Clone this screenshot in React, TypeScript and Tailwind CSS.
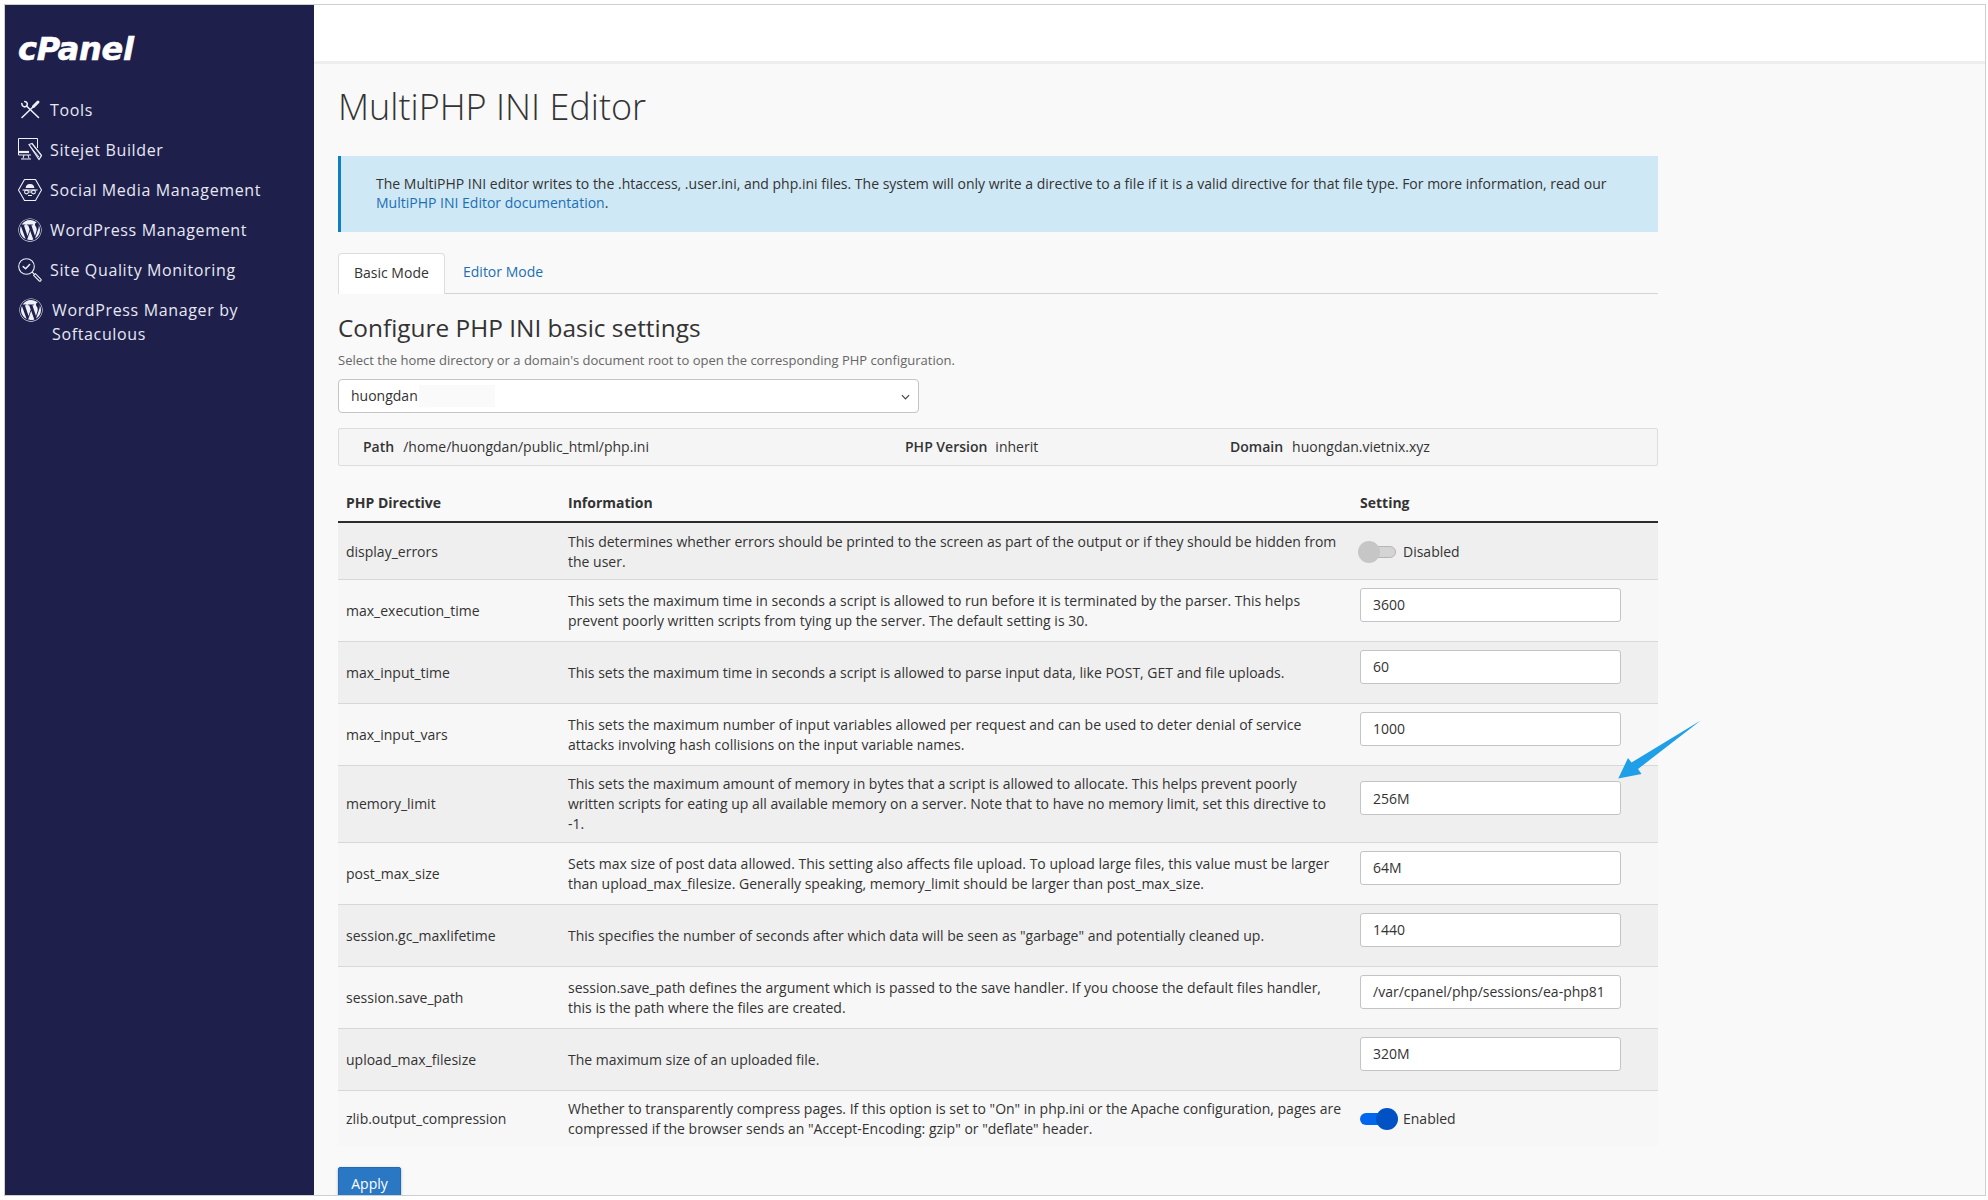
import React from "react";
import { FaWordpress } from "react-icons/fa";

const ToolsIcon = () => (
  <svg viewBox="0 0 24 24" className="w-[24px] h-[24px]" fill="none" stroke="#eef0f8" strokeLinecap="round" strokeLinejoin="round">
    <path d="M4 19.5 L15 9" strokeWidth="1.6" />
    <path d="M15.5 8.5 L20 4" strokeWidth="3" />
    <path d="M20.5 19.5 L8.5 8" strokeWidth="1.6" />
    <path d="M3.8 5.5 C4 9 7 9.5 8.5 8 C10 6.5 9.5 4 6.8 3.5" strokeWidth="1.6" />
  </svg>
);

const SitejetIcon = () => (
  <svg viewBox="0 0 24 24" className="w-[24px] h-[24px]" fill="none" stroke="#eef0f8" strokeWidth="1" strokeLinejoin="round">
    <path d="M13 17H0.5V0.5H19.5V10" />
    <path d="M0.5 14H11" strokeWidth="2.2" />
    <path d="M6 17 L5 20.5 M10 17 L11 20.5 M3 21H13" />
    <path d="M11 6.5 L14 5.5 L23.5 17.5 L21 21.5 Z" fill="#1e1f4b" strokeWidth="1.3" />
    <path d="M13 9.5 L21 19" />
  </svg>
);

const SocialIcon = () => (
  <svg viewBox="0 0 24 24" className="w-[24px] h-[24px]" fill="none" stroke="#eef0f8" strokeWidth="1.1" strokeLinejoin="round">
    <path d="M6.5 1.5H17.5L23.5 12L17.5 22.5H6.5L0.5 12Z" />
    <path d="M8.2 9.5 C9 5.5 15 5.5 15.8 9.5 Z" fill="#eef0f8" />
    <path d="M4.5 12H19.5" />
    <circle cx="8.5" cy="14" r="1.9" />
    <circle cx="15.5" cy="14" r="1.9" />
    <path d="M10.5 14H13.5M10 17.5H14" />
  </svg>
);

const QualityIcon = () => (
  <svg viewBox="0 0 24 24" className="w-[24px] h-[24px]" fill="none" stroke="#eef0f8" strokeWidth="1.1" strokeLinecap="round" strokeLinejoin="round">
    <circle cx="8.5" cy="8.5" r="7.8" />
    <path d="M5.2 8.6 L7.6 10.8 L11.6 6.6" strokeWidth="1.5" />
    <path d="M14.2 14.2 L16 16" />
    <path d="M15.6 17.3 L17.3 15.6 L23 21.4 C23.6 22.2 22.2 23.7 21.3 23 Z" />
  </svg>
);

const WpIcon = () => <FaWordpress className="w-[24px] h-[24px] text-[#eef0f8]" />;

const menu = [
  { label: "Tools", icon: <ToolsIcon /> },
  { label: "Sitejet Builder", icon: <SitejetIcon /> },
  { label: "Social Media Management", icon: <SocialIcon /> },
  { label: "WordPress Management", icon: <WpIcon /> },
  { label: "Site Quality Monitoring", icon: <QualityIcon /> },
];

type Row = { name: string; info: string[]; value?: string; toggle?: boolean; h: string; odd: boolean };

const rows: Row[] = [
  { name: "display_errors", info: ["This determines whether errors should be printed to the screen as part of the output or if they should be hidden from", "the user."], toggle: false, h: "h-[57px]", odd: true },
  { name: "max_execution_time", info: ["This sets the maximum time in seconds a script is allowed to run before it is terminated by the parser. This helps", "prevent poorly written scripts from tying up the server. The default setting is 30."], value: "3600", h: "h-[62px]", odd: false },
  { name: "max_input_time", info: ["This sets the maximum time in seconds a script is allowed to parse input data, like POST, GET and file uploads."], value: "60", h: "h-[62px]", odd: true },
  { name: "max_input_vars", info: ["This sets the maximum number of input variables allowed per request and can be used to deter denial of service", "attacks involving hash collisions on the input variable names."], value: "1000", h: "h-[62px]", odd: false },
  { name: "memory_limit", info: ["This sets the maximum amount of memory in bytes that a script is allowed to allocate. This helps prevent poorly", "written scripts for eating up all available memory on a server. Note that to have no memory limit, set this directive to", "-1."], value: "256M", h: "h-[77px]", odd: true },
  { name: "post_max_size", info: ["Sets max size of post data allowed. This setting also affects file upload. To upload large files, this value must be larger", "than upload_max_filesize. Generally speaking, memory_limit should be larger than post_max_size."], value: "64M", h: "h-[62px]", odd: false },
  { name: "session.gc_maxlifetime", info: ["This specifies the number of seconds after which data will be seen as \"garbage\" and potentially cleaned up."], value: "1440", h: "h-[62px]", odd: true },
  { name: "session.save_path", info: ["session.save_path defines the argument which is passed to the save handler. If you choose the default files handler,", "this is the path where the files are created."], value: "/var/cpanel/php/sessions/ea-php81", h: "h-[62px]", odd: false },
  { name: "upload_max_filesize", info: ["The maximum size of an uploaded file."], value: "320M", h: "h-[62px]", odd: true },
  { name: "zlib.output_compression", info: ["Whether to transparently compress pages. If this option is set to \"On\" in php.ini or the Apache configuration, pages are", "compressed if the browser sends an \"Accept-Encoding: gzip\" or \"deflate\" header."], toggle: true, h: "h-[56px]", odd: false },
];

const Toggle = ({ on }: { on: boolean }) => (
  <div className="flex items-center">
    {on ? (
      <div className="relative w-[38px] h-[22px] flex items-center">
        <div className="w-[30px] h-[12px] rounded-full bg-[#0066ee]" />
        <div className="absolute right-0 top-0 w-[22px] h-[22px] rounded-full bg-[#0052c4]" />
      </div>
    ) : (
      <div className="relative w-[38px] h-[22px] -ml-[2px] flex items-center justify-end">
        <div className="w-[30px] h-[12px] rounded-full bg-[#d4d4d4] border border-[#b5b5b5]" />
        <div className="absolute left-0 top-0 w-[22px] h-[22px] rounded-full bg-[#c6c6c6]" />
      </div>
    )}
    <span className={on ? "ml-[5px]" : "ml-[7px]"}>{on ? "Enabled" : "Disabled"}</span>
  </div>
);

export default function App() {
  return (
    <div className="relative w-[1988px] h-[1200px] bg-white pt-[4px] pl-[4px] pr-[2px] pb-[4px] font-['Open_Sans',sans-serif] text-[14px] leading-[20px] text-[#333333]">
      <div className="w-full h-full flex overflow-hidden border-b border-r border-t border-[#cfcfcf]">
        <aside className="w-[310px] shrink-0 bg-[#1e1f4b] border-l border-[#cfcfcf] text-[#e6e8f2]">
          <div className="pl-[13px] pt-[24px] h-[85px] text-white text-[32px] leading-[40px] font-bold italic font-['DejaVu_Sans',sans-serif] tracking-[-0.3px] [-webkit-text-stroke:0.6px_white]">
            cPanel
          </div>
          <nav className="flex flex-col text-[16px] leading-[24px] tracking-[0.64px]">
            {menu.map((m) => (
              <div key={m.label} className="flex items-center h-[40px] pl-[13px]">
                <span className="w-[24px] h-[24px] flex items-center justify-center shrink-0">{m.icon}</span>
                <span className="ml-[8px]">{m.label}</span>
              </div>
            ))}
            <div className="flex items-start pl-[14px] pt-[8px]">
              <span className="w-[24px] h-[24px] shrink-0 flex items-center justify-center"><WpIcon /></span>
              <span className="ml-[9px] w-[220px]">WordPress Manager by Softaculous</span>
            </div>
          </nav>
        </aside>
        <main className="flex-1 flex flex-col min-w-0 bg-[#f9f9f9]">
          <div className="h-[59px] shrink-0 bg-white border-b-[3px] border-[#eeeeee]" />
          <div className="pl-[24px] w-[1344px]">
            <h1 className="font-light text-[36px] leading-[52px] mt-[17px] text-[#333333]">MultiPHP INI Editor</h1>
            <div className="mt-[23px] h-[76px] bg-[#cfe8f5] border-l-[3px] border-[#0d7fc2] pl-[35px] pt-[19px] text-[14px] leading-[18.5px]">
              The MultiPHP INI editor writes to the .htaccess, .user.ini, and php.ini files. The system will only write a directive to a file if it is a valid directive for that file type. For more information, read our
              <br />
              <a className="text-[#1b6fb5]">MultiPHP INI Editor documentation</a>.
            </div>
            <div className="mt-[21px] h-[41px] flex border-b border-[#d4d4d4]">
              <div className="w-[107px] h-[41px] bg-white border border-b-0 border-[#dddddd] rounded-t-[4px] pl-[15px] pt-[9px]">Basic Mode</div>
              <div className="pl-[18px] pt-[9px] text-[#1b6fb5]">Editor Mode</div>
            </div>
            <h2 className="mt-[17px] text-[24.4px] leading-[33px] text-[#333333]">Configure PHP INI basic settings</h2>
            <p className="mt-[7px] text-[13px] leading-[18px] text-[#666666]">Select the home directory or a domain&apos;s document root to open the corresponding PHP configuration.</p>
            <div className="relative mt-[10px] w-[581px] h-[34px]">
              <select defaultValue="huongdan" className="appearance-none w-full h-full bg-white border border-[#c4c4c4] rounded-[4px] pl-[12px] text-[14px]">
                <option>huongdan</option>
              </select>
              <div className="absolute left-[81px] top-[6px] w-[76px] h-[22px] bg-[#fafafa]" />
              <svg viewBox="0 0 10 6" className="absolute right-[9px] top-[15px] w-[9px] h-[6px]" fill="none" stroke="#444" strokeWidth="1.3"><path d="M1 1l4 4 4-4" /></svg>
            </div>
            <div className="mt-[15px] h-[38px] flex items-center bg-[#f5f5f5] border border-[#dddddd] rounded-[2px] pl-[24px] relative">
              <b className="font-semibold">Path</b><span className="ml-[9px]">/home/huongdan/public_html/php.ini</span>
              <span className="absolute left-[566px] flex"><b className="font-semibold">PHP Version</b><span className="ml-[8px]">inherit</span></span>
              <span className="absolute left-[891px] flex"><b className="font-semibold">Domain</b><span className="ml-[9px]">huongdan.vietnix.xyz</span></span>
            </div>
            <table className="mt-[18px] w-[1320px] table-fixed border-collapse text-left">
              <colgroup>
                <col className="w-[222px]" />
                <col className="w-[792px]" />
                <col className="w-[306px]" />
              </colgroup>
              <thead>
                <tr className="h-[38px] border-b-2 border-[#2b2b2b]">
                  <th className="px-[8px] font-bold">PHP Directive</th>
                  <th className="px-[8px] font-bold">Information</th>
                  <th className="px-[8px] font-bold">Setting</th>
                </tr>
              </thead>
              <tbody>
                {rows.map((r) => (
                  <tr key={r.name} className={`${r.h} ${r.odd ? "bg-[#efefef]" : "bg-[#f7f7f7]"} border-b border-[#d8d8d8] last:border-b-0`}>
                    <td className="px-[8px] pt-[1.5px] align-middle">{r.name}</td>
                    <td className="px-[8px] pt-[1.5px] align-middle">
                      {r.info.map((l) => (<div key={l} className="whitespace-nowrap">{l}</div>))}
                    </td>
                    <td className="px-[8px] align-middle">
                      {r.toggle !== undefined ? (
                        <div className="pt-[1.5px]"><Toggle on={r.toggle} /></div>
                      ) : (
                        <input readOnly defaultValue={r.value} className="block w-[261px] h-[34px] mb-[11px] bg-white border border-[#c4c4c4] rounded-[3px] px-[12px] text-[14px] text-[#333333]" />
                      )}
                    </td>
                  </tr>
                ))}
              </tbody>
            </table>
            <button className="mt-[21px] w-[63px] h-[34px] bg-[#2a77c4] border border-[#1f6bb5] rounded-[2px] text-white text-[14px] shadow-[0_1px_3px_rgba(0,0,0,0.3)]">Apply</button>
          </div>
        </main>
      </div>
      <svg className="absolute left-[1600px] top-[710px] w-[110px] h-[80px] pointer-events-none" viewBox="0 0 110 80">
        <path d="M100.7 10.5 L38 59 L41.5 64 L18.3 68.5 L28 48 L31.5 52.5 Z" fill="#1f9fe8" />
      </svg>
    </div>
  );
}
